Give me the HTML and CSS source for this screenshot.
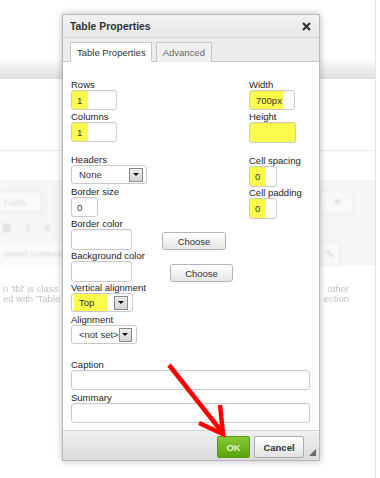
FILE: index.html
```html
<!DOCTYPE html>
<html>
<head>
<meta charset="utf-8">
<title>Table Properties</title>
<link rel="stylesheet" href="styles.css">
</head>
<body>

<div class="page">
  <div class="page-bar"></div>
  <div class="editor">
    <div class="editor-tools">
      <div class="tools-row">
        <span class="tool-select">Form</span>
        <span class="tool-btn"><span class="caret"></span></span>
      </div>
      <div class="tools-row">
        <span class="tool-icons"><b>B</b> <i>I</i> <span>&#8801;</span></span>
      </div>
      <div class="tools-row">
        <span class="tool-insert">Insert content</span>
        <span class="tool-btn small">&#9998;</span>
      </div>
    </div>
    <div class="editor-text">
      <p><span>n 'tbl' is class</span><span>other</span></p>
      <p><span>ed with 'Table</span><span>ection</span></p>
    </div>
  </div>
</div>

<div class="dialog">
  <div class="dialog-head">
    <span class="dialog-title">Table Properties</span>
    <svg class="close" width="9" height="9" viewBox="0 0 9 9"><path d="M1 1L8 8M8 1L1 8" stroke="#333" stroke-width="2.2"/></svg>
  </div>
  <div class="tabs">
    <span class="tab active">Table Properties</span>
    <span class="tab">Advanced</span>
  </div>

  <div class="dialog-body">
    <div class="cols">
      <div class="col-left">
        <div class="field">
          <label>Rows</label>
          <input class="tb w46 mark-s" value="1">
        </div>
        <div class="field">
          <label>Columns</label>
          <input class="tb w46 mark-s" value="1">
        </div>
        <div class="field gap">
          <label>Headers</label>
          <div class="listbox w76"><span class="lb-text">None</span><span class="lb-arrow"></span></div>
        </div>
        <div class="field">
          <label>Border size</label>
          <input class="tb w27" value="0">
        </div>
        <div class="field">
          <label>Border color</label>
          <div class="color-row">
            <input class="tb w61 tall" value="">
            <button class="btn choose">Choose</button>
          </div>
        </div>
        <div class="field">
          <label>Background color</label>
          <div class="color-row">
            <input class="tb w61 tall" value="">
            <button class="btn choose second">Choose</button>
          </div>
        </div>
        <div class="field">
          <label>Vertical alignment</label>
          <div class="listbox w62"><span class="lb-text marked">Top</span><span class="lb-arrow"></span></div>
        </div>
        <div class="field">
          <label>Alignment</label>
          <div class="listbox w66"><span class="lb-text">&lt;not set&gt;</span><span class="lb-arrow"></span></div>
        </div>
      </div>

      <div class="col-right">
        <div class="field">
          <label>Width</label>
          <input class="tb w46 mark-m" value="700px">
        </div>
        <div class="field">
          <label>Height</label>
          <input class="tb w47 tall mark-all" value="">
        </div>
        <div class="field gap-r">
          <label>Cell spacing</label>
          <input class="tb w28 tall mark-s" value="0">
        </div>
        <div class="field">
          <label>Cell padding</label>
          <input class="tb w28 tall mark-s" value="0">
        </div>
      </div>
    </div>

    <div class="field wide first">
      <label>Caption</label>
      <input class="tb full" value="">
    </div>
    <div class="field wide">
      <label>Summary</label>
      <input class="tb full" value="">
    </div>
  </div>

  <div class="dialog-foot">
    <button class="btn ok">OK</button>
    <button class="btn cancel">Cancel</button>
    <span class="resize"></span>
  </div>
</div>

<svg class="pointer" width="380" height="478" viewBox="0 0 380 478">
  <path d="M169 365L222 432" stroke="#f00" stroke-width="4.5" fill="none"/>
  <path d="M199 423L223 434L220 405" stroke="#f00" stroke-width="4.5" fill="none"/>
</svg>

</body>
</html>
```

FILE: styles.css
```css
body {
	margin: 0;
	font-family: "Liberation Sans", Arial, sans-serif;
	font-size: 9.5px;
	color: #333;
	background: #fff;
}

/* faded editor behind the dialog */
.page {
	width: 376px;
	height: 478px;
	border-right: 1px solid #e4e4e4;
	box-sizing: border-box;
	overflow: hidden;
}

.page-bar {
	margin-top: 59px;
	height: 20px;
	background: linear-gradient(#fdfdfd, #dedede);
}

.editor {
	margin-top: 71px;
	border-top: 1px solid #eaeaea;
}

.editor-tools {
	margin-top: 29px;
	height: 85px;
	padding-top: 10px;
	box-sizing: border-box;
	background: #f5f5f5;
	color: #d2d2d2;
}

.tools-row {
	display: flex;
	justify-content: space-between;
	align-items: center;
	padding-right: 22px;
	height: 24px;
	margin-bottom: 2px;
}

.tool-select {
	width: 42px;
	height: 22px;
	line-height: 22px;
	padding-left: 4px;
	box-sizing: border-box;
	border: 1px solid #e6e6e6;
	border-left: 0;
	background: #fafafa;
	filter: blur(0.8px);
}

.tool-btn {
	display: flex;
	align-items: center;
	justify-content: center;
	width: 31px;
	height: 22px;
	border: 1px solid #e8e8e8;
	background: #f9f9f9;
	filter: blur(0.8px);
}

.tool-btn.small {
	width: 20px;
	margin-right: 13px;
	font-size: 11px;
}

.caret {
	border-left: 4px solid transparent;
	border-right: 4px solid transparent;
	border-top: 4px solid #d4d4d4;
}

.tool-icons {
	padding-left: 3px;
	font-size: 11px;
	letter-spacing: 6px;
	filter: blur(0.8px);
}

.tool-insert {
	width: 62px;
	height: 22px;
	line-height: 22px;
	padding-left: 4px;
	box-sizing: border-box;
	background: #fbfbfb;
	white-space: nowrap;
	overflow: hidden;
	filter: blur(0.8px);
}

.editor-text {
	padding-top: 19px;
	color: #c4c4c4;
	filter: blur(0.6px);
}

.editor-text p {
	margin: 0;
	padding: 0 26px 0 3px;
	display: flex;
	justify-content: space-between;
	line-height: 10px;
}

/* dialog */
.dialog {
	position: absolute;
	left: 62px;
	top: 14px;
	width: 256px;
	background: #fff;
	border: 1px solid #b8b8b8;
	box-shadow: 0 0 7px rgba(0, 0, 0, 0.28);
}

.dialog-head {
	display: flex;
	justify-content: space-between;
	align-items: center;
	height: 22px;
	padding: 0 8px 0 7px;
	background: linear-gradient(#f2f2f2, #e8e8e8);
	border-bottom: 1px solid #d2d2d2;
}

.dialog-title {
	font-size: 10.4px;
	font-weight: bold;
	color: #333;
}

.tabs {
	display: flex;
	gap: 4px;
	padding: 4px 0 0 7px;
	background: #ececec;
	border-bottom: 1px solid #c8c8c8;
}

.tab {
	height: 20px;
	line-height: 19px;
	padding: 0 6px;
	box-sizing: border-box;
	margin-bottom: -1px;
	border: 1px solid #c8c8c8;
	border-bottom: 0;
	background: #f0f0f0;
	color: #666;
}

.tab.active {
	background: #fff;
	color: #333;
	border-bottom: 1px solid #fff;
	padding: 0 5px 0 6px;
}

.dialog-body {
	padding: 17px 7px 7px 8px;
}

.cols {
	display: flex;
}

.col-left {
	width: 178px;
}

.col-right {
	flex: 1;
}

.field {
	height: 32px;
}

.field.gap {
	margin-top: 11px;
}

.field.gap-r {
	margin-top: 12px;
}

.field.wide {
	height: auto;
}

.field.wide.first {
	margin-top: 13px;
	margin-bottom: 2px;
}

label {
	display: block;
	height: 11px;
	line-height: 11px;
	color: #222;
	white-space: nowrap;
}

.tb {
	display: block;
	height: 20px;
	padding: 0 5px;
	box-sizing: border-box;
	font: inherit;
	color: #333;
	border: 1px solid #cacaca;
	border-radius: 3px;
	background: #fff;
	box-shadow: inset 0 1px 1px rgba(0, 0, 0, 0.04);
	outline: none;
}

.tb.tall { height: 21px; }
.w27 { width: 27px; }
.w28 { width: 28px; }
.w46 { width: 46px; }
.w47 { width: 47px; }
.w61 { width: 61px; }
.full { width: 239px; }

.mark-s { background: linear-gradient(to right, #fbfb4e 16px, #fff 16px); }
.mark-m { background: linear-gradient(to right, #fbfb4e 33px, #fff 33px); padding-left: 6px; }
.mark-all { background: #fbfb4e; }

.color-row {
	display: flex;
	align-items: flex-end;
}

.btn {
	font: inherit;
	color: #333;
	border: 1px solid #b4b4b4;
	border-radius: 3px;
	background: linear-gradient(#fff, #e6e6e6);
	padding: 0;
}

.choose {
	width: 64px;
	height: 18px;
	margin-left: 30px;
}

.choose.second {
	width: 63px;
	margin-left: 38px;
}

.listbox {
	display: flex;
	align-items: center;
	height: 19px;
	box-sizing: border-box;
	border: 1px solid #cacaca;
	border-radius: 3px;
	background: #fff;
	padding-right: 3px;
}

.w62 { width: 62px; padding-right: 4px; }
.w66 { width: 66px; padding-right: 4px; }
.w76 { width: 76px; }

.lb-text {
	flex: 1;
	padding-left: 7px;
	white-space: nowrap;
	color: #333;
}

.lb-text.marked {
	flex: none;
	width: 33px;
	height: 17px;
	line-height: 17px;
	margin-left: 2px;
	margin-right: auto;
	padding-left: 5px;
	box-sizing: border-box;
	background: #fbfb4e;
}

.lb-arrow {
	display: flex;
	align-items: center;
	justify-content: center;
	width: 14px;
	height: 14px;
	box-sizing: border-box;
	border: 1px solid #8a8a8a;
	background: linear-gradient(#ececec, #d4d4d4);
}

.lb-arrow::after {
	content: "";
	border-left: 3px solid transparent;
	border-right: 3px solid transparent;
	border-top: 3px solid #111;
}

.dialog-foot {
	display: flex;
	justify-content: flex-end;
	gap: 4px;
	height: 30px;
	padding-top: 5px;
	box-sizing: border-box;
	border-top: 1px solid #d4d4d4;
	background: linear-gradient(#f0f0f0, #dadada);
}

.btn.ok {
	width: 33px;
	height: 22px;
	font-weight: bold;
	color: #e2f5c8;
	border-color: #5b9a18;
	border-radius: 2px;
	background: linear-gradient(#86c935, #5aa20c);
}

.btn.cancel {
	width: 50px;
	height: 22px;
	font-weight: bold;
	border-color: #acacac;
	border-radius: 2px;
	background: linear-gradient(#fff, #e2e2e2);
}

.resize {
	align-self: flex-end;
	width: 0;
	height: 0;
	margin: 0 3px 4px 1px;
	border-left: 7px solid transparent;
	border-bottom: 7px solid #6a6a6a;
}

/* red annotation arrow */
.pointer {
	position: absolute;
	left: 0;
	top: 0;
	pointer-events: none;
}
```
